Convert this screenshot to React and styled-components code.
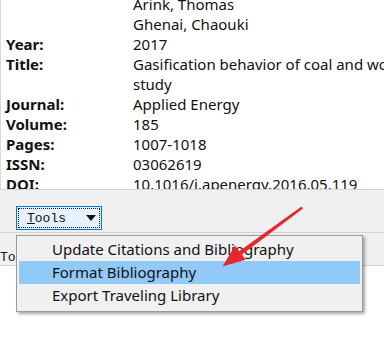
import React from "react";
import styled, { createGlobalStyle } from "styled-components";

const GlobalStyle = createGlobalStyle`
	html, body {
		margin: 0;
		padding: 0;
		background: #ffffff;
	}
	body {
		font-family: "Noto Sans", "Open Sans", sans-serif;
	}
`;

const fields = [
	{ label: "", lines: ["Arink, Thomas"] },
	{ label: "", lines: ["Ghenai, Chaouki"] },
	{ label: "Year:", lines: ["2017"] },
	{
		label: "Title:",
		lines: ["Gasification behavior of coal and woody biomass: Validation and parametrical", "study"],
	},
	{ label: "Journal:", lines: ["Applied Energy"] },
	{ label: "Volume:", lines: ["185"] },
	{ label: "Pages:", lines: ["1007-1018"] },
	{ label: "ISSN:", lines: ["03062619"] },
	{ label: "DOI:", lines: ["10.1016/j.apenergy.2016.05.119"] },
];

const menuItems = [
	"Update Citations and Bibliography",
	"Format Bibliography",
	"Export Traveling Library",
];

function RedArrow() {
	// tapered arrow, tip at bottom-left
	return (
		<ArrowLayer width="384" height="338" viewBox="0 0 384 338">
			<polygon
				points="301.5,206.5 303,208.5 242,254.6 245.6,259.8 222.5,266.5 235,245.4 239.2,251.2"
				fill="#e8262d"
			/>
		</ArrowLayer>
	);
}

function App() {
	return (
		<>
			<GlobalStyle />
			<Page>
				<RecordPanel>
					<FieldGrid>
						{fields.map((f, i) => (
							<React.Fragment key={i}>
								<Label>{f.label}</Label>
								<Value>
									{f.lines.map((line, j) => (
										<div key={j}>{line}</div>
									))}
								</Value>
							</React.Fragment>
						))}
					</FieldGrid>
				</RecordPanel>
				<Toolbar>
					<ToolsButton>
						<span>
							<u>T</u>ools
						</span>
						<DropCaret />
					</ToolsButton>
				</Toolbar>
				<StatusBar>
					<StatusText>Tools</StatusText>
				</StatusBar>
				<Menu>
					{menuItems.map((item) => (
						<MenuItem key={item} active={item === "Format Bibliography"}>
							{item}
						</MenuItem>
					))}
				</Menu>
				<RedArrow />
			</Page>
		</>
	);
}

export default App;

const Page = styled.div`
	position: relative;
	width: 384px;
	height: 338px;
	overflow: hidden;
	background: #ffffff;
`;

const RecordPanel = styled.div`
	height: 190px;
	background: #ffffff;
	border-left: 1px solid #dadada;
	border-bottom: 1px solid #d4d4d4;
	overflow: hidden;
	box-sizing: border-box;
`;

const FieldGrid = styled.div`
	display: grid;
	grid-template-columns: 132px max-content;
	margin-top: -6px;
	font-size: 15px;
	line-height: 20px;
	color: #111111;
	white-space: nowrap;
`;

const Label = styled.div`
	padding-left: 5px;
	font-weight: bold;
`;

const Value = styled.div``;

const Toolbar = styled.div`
	height: 43px;
	background: #f0f0f0;
	padding: 16px 0 0 16px;
	box-sizing: border-box;
	border-bottom: 1px solid #d6d6d6;
`;

const ToolsButton = styled.div`
	display: flex;
	align-items: center;
	justify-content: space-between;
	width: 86px;
	height: 24px;
	box-sizing: border-box;
	padding: 0 5px 0 10px;
	background: #e5f1fb;
	border: 1px solid #0078d7;
	outline: 1px dotted #1a1a1a;
	outline-offset: -3px;
	font-family: "Liberation Mono", "DejaVu Sans Mono", monospace;
	font-size: 13px;
	color: #111111;
`;

const DropCaret = styled.span`
	width: 0;
	height: 0;
	border-left: 5px solid transparent;
	border-right: 5px solid transparent;
	border-top: 6px solid #111111;
`;

const StatusBar = styled.div`
	height: 33px;
	box-sizing: border-box;
	background: #f0f0f0;
	border-bottom: 1px solid #c9d3dd;
	display: flex;
	align-items: flex-end;
`;

const StatusText = styled.span`
	font-family: "Liberation Mono", "DejaVu Sans Mono", monospace;
	font-size: 13px;
	line-height: 14px;
	color: #111111;
`;

const Menu = styled.div`
	position: absolute;
	left: 16px;
	top: 235px;
	width: 347px;
	height: 77px;
	box-sizing: border-box;
	padding: 2px;
	background: #f0f0f0;
	border: 1px solid #9a9a9a;
	box-shadow: 2px 2px 3px rgba(0, 0, 0, 0.35);
	display: flex;
	flex-direction: column;
`;

const MenuItem = styled.div`
	height: 23px;
	line-height: 23px;
	padding-left: 33px;
	font-size: 15px;
	color: #111111;
	background: ${(p) => (p.active ? "#91c9f7" : "transparent")};
	white-space: nowrap;
`;

const ArrowLayer = styled.svg`
	position: absolute;
	left: 0;
	top: 0;
	pointer-events: none;
`;
